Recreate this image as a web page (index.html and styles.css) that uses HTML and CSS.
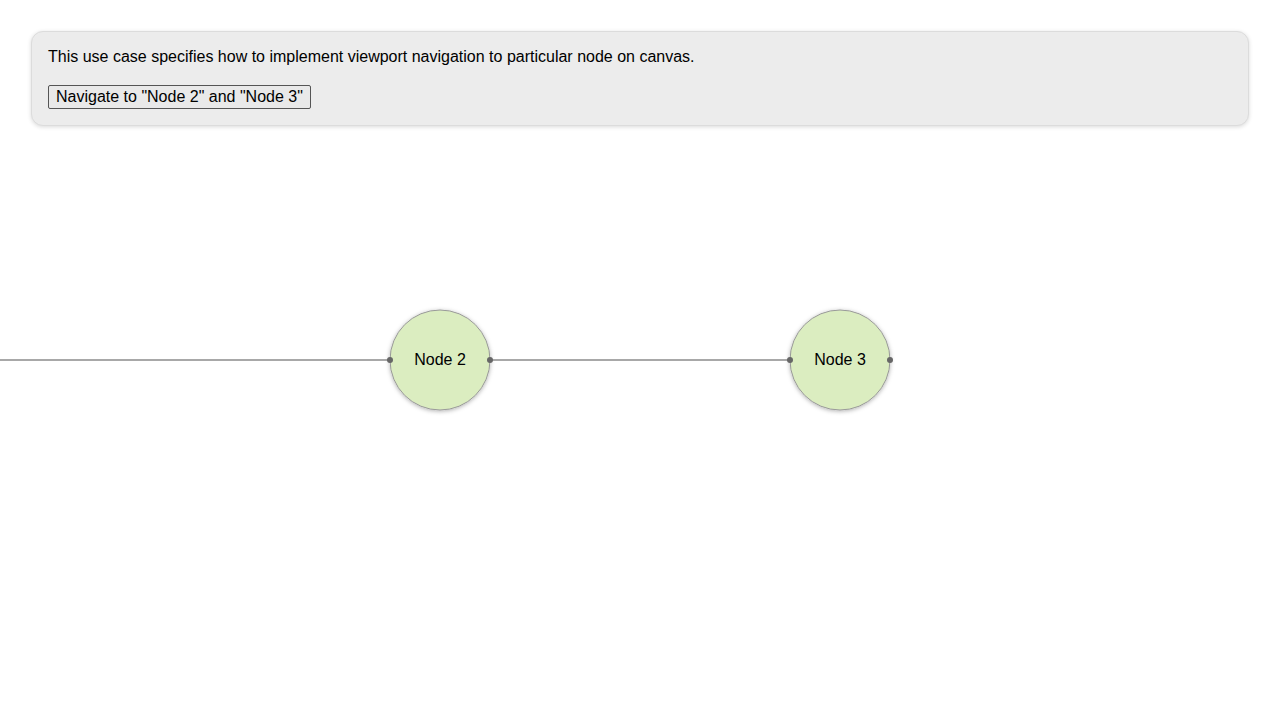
FILE: index.html
```html
<!DOCTYPE html>
<html>
<head>
<meta charset="utf-8">
<link rel="stylesheet" href="styles.css">
</head>
<body>
<div class="panel">
  <p class="desc">This use case specifies how to implement viewport navigation to particular node on canvas.</p>
  <button class="btn">Navigate to "Node 2" and "Node 3"</button>
</div>
<svg class="canvas" width="1280" height="720" viewBox="0 0 1280 720">
  <defs>
    <filter id="sh" x="-30%" y="-30%" width="160%" height="160%">
      <feDropShadow dx="0" dy="1" stdDeviation="2" flood-color="#000" flood-opacity="0.3"/>
    </filter>
  </defs>
  <line x1="0" y1="360" x2="390" y2="360" class="edge"/>
  <line x1="490" y1="360" x2="790" y2="360" class="edge"/>
  <circle cx="440" cy="360" r="50" class="node" filter="url(#sh)"/>
  <text x="440" y="364.5" class="label">Node 2</text>
  <circle cx="390" cy="360" r="3" class="port"/>
  <circle cx="490" cy="360" r="3" class="port"/>
  <circle cx="840" cy="360" r="50" class="node" filter="url(#sh)"/>
  <text x="840" y="364.5" class="label">Node 3</text>
  <circle cx="790" cy="360" r="3" class="port"/>
  <circle cx="890" cy="360" r="3" class="port"/>
</svg>
</body>
</html>
```
FILE: styles.css
```css
html, body {
  margin: 0;
  padding: 0;
  background: #fff;
  font-family: "Liberation Sans", Arial, sans-serif;
  font-size: 16px;
  color: #111;
}
body {
  position: relative;
  width: 1280px;
  height: 720px;
  overflow: hidden;
}
.panel {
  position: relative;
  z-index: 1;
  margin: 31px 31px 0 31px;
  padding: 16px 16px 16px 16px;
  background: #ececec;
  border: 1px solid #dcdcdc;
  border-radius: 12px;
  box-shadow: 0 1px 4px rgba(0,0,0,0.15);
  box-sizing: border-box;
  height: 95px;
  padding-top: 16px;
}
.desc {
  margin: 0 0 19px 0;
  line-height: 18px;
  color: #000;
}
.btn {
  font-family: "Liberation Sans", Arial, sans-serif;
  font-size: 16px;
  color: #000;
  background: #e9e9e9;
  border: 1px solid #555;
  border-radius: 2px;
  padding: 1px 7px;
  height: 24px;
  line-height: 18px;
}
.canvas {
  position: absolute;
  left: 0;
  top: 0;
  z-index: 0;
}
.edge {
  stroke: #a8a8a8;
  stroke-width: 2;
}
.node {
  fill: #dbedc0;
  stroke: #999;
  stroke-width: 1;
}
.port {
  fill: #666;
}
.label {
  font-family: "Liberation Sans", Arial, sans-serif;
  font-size: 16px;
  fill: #000;
  text-anchor: middle;
}
```
